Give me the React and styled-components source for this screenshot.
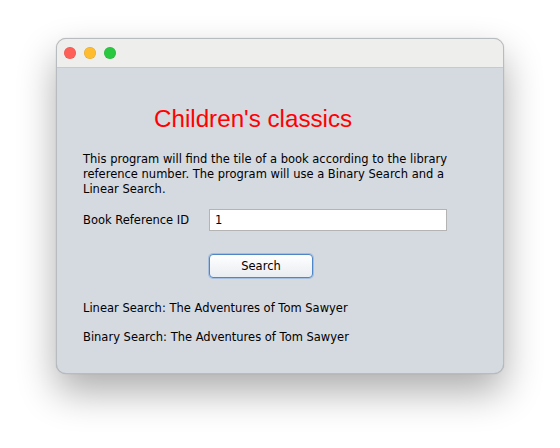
import React from 'react';
import styled, { createGlobalStyle } from 'styled-components';

const GlobalStyle = createGlobalStyle`
  html, body {
    margin: 0;
    padding: 0;
    background: #ffffff;
  }
`;

const Page = styled.div`
  width: 560px;
  height: 448px;
  padding: 38px 56px;
  box-sizing: border-box;
`;

const Window = styled.div`
  width: 448px;
  height: 336px;
  border-radius: 10px;
  overflow: hidden;
  background: #d5d9e0;
  border: 1px solid #b8bbc0;
  box-sizing: border-box;
  box-shadow: 0 18px 38px rgba(0, 0, 0, 0.32), 0 0 1px rgba(0, 0, 0, 0.3);
  display: flex;
  flex-direction: column;
`;

const TitleBar = styled.div`
  height: 28px;
  background: #eeeeec;
  border-bottom: 1px solid #c9c9c9;
  display: flex;
  align-items: center;
  gap: 8px;
  padding-left: 7px;
`;

const Light = styled.span`
  width: 12px;
  height: 12px;
  border-radius: 50%;
  background: ${p => p.color};
  box-shadow: inset 0 0 0 0.5px rgba(0, 0, 0, 0.12);
`;

const Content = styled.div`
  flex: 1;
  padding: 0 26px;
  font-family: "DejaVu Sans", "Liberation Sans", sans-serif;
  font-size: 11.5px;
  color: #000;
`;

const Heading = styled.h1`
  margin: 37px 0 0 71px;
  font-family: "Liberation Sans", Arial, sans-serif;
  font-weight: normal;
  font-size: 24.2px;
  line-height: 28px;
  color: #ff0000;
`;

const Intro = styled.p`
  margin: 19px 0 0;
  line-height: 15px;
`;

const Row = styled.div`
  display: flex;
  align-items: center;
  margin-top: 12px;
`;

const Label = styled.label`
  width: 126px;
`;

const Field = styled.input`
  width: 238px;
  height: 22px;
  box-sizing: border-box;
  border: 1px solid #b4b4b4;
  background: #fff;
  font: inherit;
  color: #000;
  padding: 0 5px;
  outline: none;
`;

const ButtonRow = styled.div`
  margin: 23px 0 0 126px;
`;

const Button = styled.button`
  width: 104px;
  height: 24px;
  box-sizing: border-box;
  border: 1px solid #4e86c8;
  border-radius: 4px;
  background: linear-gradient(#ffffff, #e9ecf1);
  box-shadow: 0 0 0 1px rgba(110, 160, 220, 0.45);
  font: inherit;
  color: #000;
  padding: 0;
`;

const Result = styled.p`
  margin: ${p => p.top}px 0 0;
  line-height: 15px;
`;

export default function App() {
  return (
    <>
      <GlobalStyle />
      <Page>
        <Window>
          <TitleBar>
            <Light color="#fe5f57" />
            <Light color="#febc2e" />
            <Light color="#28c840" />
          </TitleBar>
          <Content>
            <Heading>Children's classics</Heading>
            <Intro>
              This program will find the tile of a book according to the library
              reference number. The program will use a Binary Search and a
              Linear Search.
            </Intro>
            <Row>
              <Label>Book Reference ID</Label>
              <Field defaultValue="1" />
            </Row>
            <ButtonRow>
              <Button>Search</Button>
            </ButtonRow>
            <Result top={23}>Linear Search: The Adventures of Tom Sawyer</Result>
            <Result top={14}>Binary Search: The Adventures of Tom Sawyer</Result>
          </Content>
        </Window>
      </Page>
    </>
  );
}
